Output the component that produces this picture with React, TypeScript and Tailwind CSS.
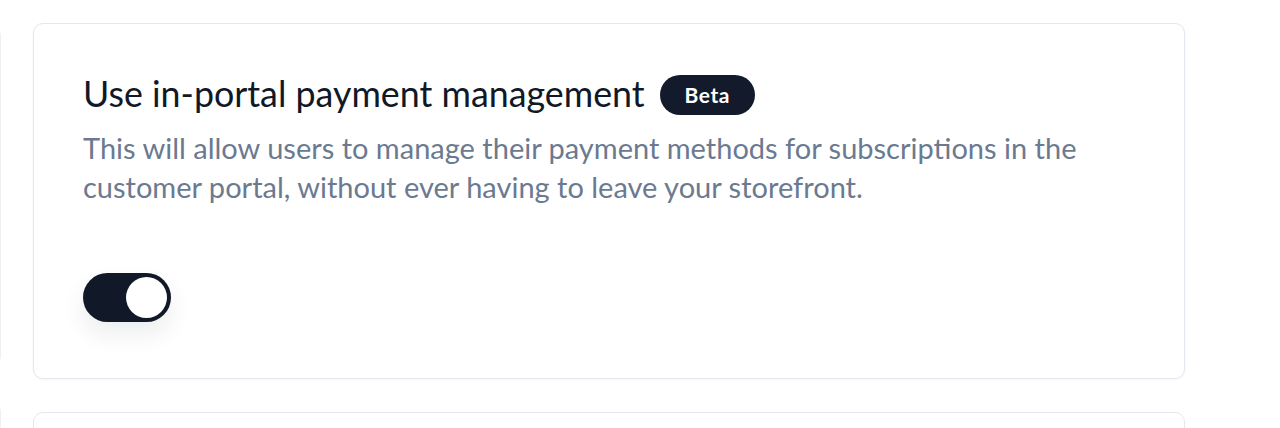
import { useState } from "react";

const Toggle = ({ on, onChange }: { on: boolean; onChange: () => void }) => (
  <button
    type="button"
    role="switch"
    aria-checked={on}
    onClick={onChange}
    className={`flex h-[49px] w-[88px] items-center rounded-full p-[4px] shadow-[0_12px_24px_rgba(15,23,42,0.08)] ${
      on ? "justify-end bg-[#111827]" : "justify-start bg-[#e5e7eb]"
    }`}
  >
    <span className="block h-[41px] w-[41px] rounded-full bg-white" />
  </button>
);

export default function App() {
  const [enabled, setEnabled] = useState(true);

  return (
    <div
      className="flex h-[428px] overflow-hidden bg-white"
      style={{ fontFamily: "Lato, 'Noto Sans', sans-serif" }}
    >
      {/* edge of the neighbouring column */}
      <div className="flex w-px flex-col gap-[50px] pt-[33px]">
        <div className="h-[337px] bg-[#eef0f4]" />
        <div className="h-[20px] bg-[#eef0f4]" />
      </div>
      <div className="flex flex-col gap-[33px] pl-[32px] pt-[23px]">
        <div className="h-[356px] w-[1152px] shrink-0 rounded-[10px] border border-[#e3e7ee] bg-white px-[49px] pt-[48px] shadow-[0_1px_3px_rgba(15,23,42,0.04)]">
          <div className="flex items-center gap-[15px]">
            <h2 className="text-[35.8px] leading-[44px] text-[#111827]">
              Use in-portal payment management
            </h2>
            <span className="mt-[1px] flex h-[40px] items-center rounded-full bg-[#131a2c] px-[25px] text-[21px] font-bold tracking-[0.5px] text-white">
              Beta
            </span>
          </div>
          <p className="mt-[12px] max-w-[1040px] text-[29px] leading-[39px] text-[#6b7a90]">
            This will allow users to manage their payment methods for
            subscriptions in the customer portal, without ever having to leave
            your storefront.
          </p>
          <div className="mt-[67px]">
            <Toggle on={enabled} onChange={() => setEnabled(!enabled)} />
          </div>
        </div>
        <div className="h-[60px] w-[1152px] shrink-0 rounded-[10px] border border-[#e3e7ee] bg-white" />
      </div>
    </div>
  );
}
